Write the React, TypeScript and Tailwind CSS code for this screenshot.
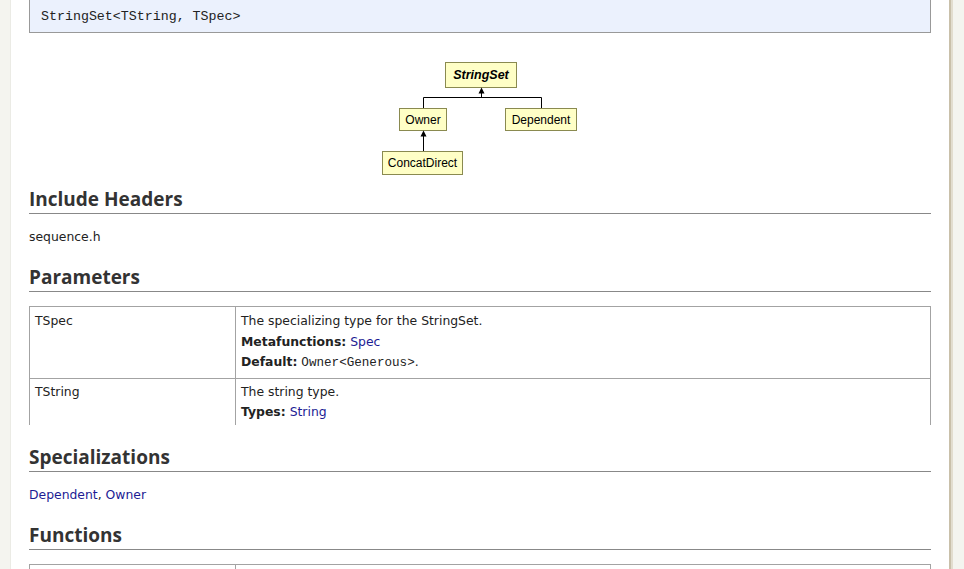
import React from 'react';

const body = { fontFamily: '"DejaVu Sans", sans-serif' };
const heading = { fontFamily: '"Open Sans", sans-serif' };
const mono = { fontFamily: '"Liberation Mono", monospace' };

function Heading({ children, className = '' }: { children: React.ReactNode; className?: string }) {
  return (
    <h2
      style={heading}
      className={`text-[19px] font-bold leading-[24px] pb-[2px] text-[#333] border-b border-[#888] ${className}`}
    >
      {children}
    </h2>
  );
}

function Link({ children }: { children: React.ReactNode }) {
  return <span className="text-[#1c1c94]">{children}</span>;
}

// inheritance diagram, drawn as svg
function Diagram() {
  const box = 'fill-[#ffffc6] stroke-[#8a8a50]';
  return (
    <svg width="196" height="116" viewBox="0 0 196 116" className="block mx-auto" style={{ fontFamily: '"Liberation Sans", sans-serif' }}>
      <g transform="translate(-1,0)">
        <rect x="64.5" y="2.5" width="71" height="25" className={box} />
        <text x="100" y="19" textAnchor="middle" fontSize="12.5" fontWeight="bold" fontStyle="italic" fill="#000">StringSet</text>

        <rect x="18.5" y="48.5" width="47" height="22" className={box} />
        <text x="42" y="63.5" textAnchor="middle" fontSize="12" fill="#000">Owner</text>

        <rect x="124.5" y="48.5" width="71" height="22" className={box} />
        <text x="160" y="63.5" textAnchor="middle" fontSize="12" fill="#000">Dependent</text>

        <rect x="1.5" y="91.5" width="80" height="23" className={box} />
        <text x="41.5" y="107" textAnchor="middle" fontSize="12" fill="#000">ConcatDirect</text>

        <g stroke="#000" strokeWidth="1" fill="none">
          <path d="M100.5 32 V37.5 M42.5 48 V37.5 H160.5 V48" />
          <path d="M42.5 75 V91" />
        </g>
        <path d="M100.5 27.5 L97.5 33.5 H103.5 Z" fill="#000" />
        <path d="M42.5 70.5 L39.5 76.5 H45.5 Z" fill="#000" />
      </g>
    </svg>
  );
}

export default function App() {
  return (
    <div className="flex w-[964px] h-[569px] overflow-hidden bg-[#f4f4ef]" style={body}>
      <div className="w-[11px] shrink-0 bg-[#f4f4ef] border-r border-[#ebebe5]" />
      <main className="w-[938px] shrink-0 bg-white pl-[18px] pr-[18px] text-[12.4px] text-[#222]">
        <div className="h-[33px] bg-[#ebf1fd] border border-t-0 border-[#999] pl-[11px] pt-[7px]">
          <span style={mono} className="text-[13.3px] text-[#222]">StringSet&lt;TString, TSpec&gt;</span>
        </div>

        <div className="mt-[27px]">
          <Diagram />
        </div>

        <Heading className="mt-[11px]">Include Headers</Heading>
        <p className="mt-[13px] leading-[20px]">sequence.h</p>

        <Heading className="mt-[18px]">Parameters</Heading>
        <div className="mt-[14px] border-t border-l border-r border-[#a3a3a3]">
          <div className="grid grid-cols-[206px_1fr] border-b border-[#a3a3a3]">
            <div className="border-r border-[#a3a3a3] px-[5px] pt-[4px] pb-[4px] leading-[20.5px]">TSpec</div>
            <div className="px-[5px] pt-[4px] pb-[4px] leading-[20.5px]">
              <div>The specializing type for the StringSet.</div>
              <div>
                <b>Metafunctions:</b> <Link>Spec</Link>
              </div>
              <div>
                <b>Default:</b> <span style={mono} className="text-[12.6px]">Owner&lt;Generous&gt;</span>.
              </div>
            </div>
          </div>
          <div className="grid grid-cols-[206px_1fr] h-[46px]">
            <div className="border-r border-[#a3a3a3] px-[5px] pt-[3px] leading-[20px]">TString</div>
            <div className="px-[5px] pt-[3px] leading-[20px]">
              <div>The string type.</div>
              <div>
                <b>Types:</b> <Link>String</Link>
              </div>
            </div>
          </div>
        </div>

        <Heading className="mt-[20px]">Specializations</Heading>
        <p className="mt-[13px] leading-[20px]">
          <Link>Dependent</Link>, <Link>Owner</Link>
        </p>

        <Heading className="mt-[18px]">Functions</Heading>
        <div className="mt-[14px] border-t border-l border-r border-[#a3a3a3] grid grid-cols-[206px_1fr] h-[20px]">
          <div className="border-r border-[#a3a3a3]" />
          <div />
        </div>
      </main>
      <div className="w-[2px] shrink-0 bg-[#c9c0aa]" />
      <div className="w-[2px] shrink-0 bg-[#e2ddcf]" />
      <div className="flex-1 bg-[#f4f4ef]" />
    </div>
  );
}
